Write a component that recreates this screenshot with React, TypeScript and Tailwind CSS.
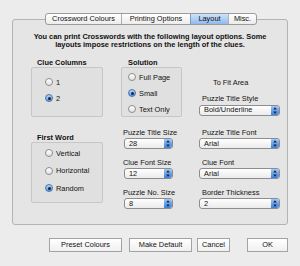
import React from 'react';

function Radio({ checked, label }: { checked?: boolean; label: string }) {
  return (
    <div className="flex h-[9px] items-center gap-[3px]">
      {checked ? (
        <span className="flex h-[8px] w-[8px] items-center justify-center rounded-full border border-[#4a74a8] bg-linear-to-b from-[#b7d6f7] to-[#5b97e2]">
          <span className="h-[3px] w-[3px] rounded-full bg-[#15233d]" />
        </span>
      ) : (
        <span className="h-[8px] w-[8px] rounded-full border border-[#8c8c8c] bg-linear-to-b from-white to-[#e2e2e2]" />
      )}
      <span className="leading-[9px]">{label}</span>
    </div>
  );
}

function Popup({ value, className = '' }: { value: string; className?: string }) {
  return (
    <div
      className={`flex h-[11px] items-center overflow-hidden rounded-[3px] border border-[#8d8d8d] bg-linear-to-b from-white to-[#ebebeb] pl-[4px] ${className}`}
    >
      <span className="flex-1 leading-none">{value}</span>
      <span className="flex h-full w-[8px] items-center justify-center rounded-r-[2px] bg-linear-to-b from-[#9cc8f6] to-[#3d7fdb]">
        <svg width="4" height="7" viewBox="0 0 4 7">
          <path d="M2 0.3L3.8 2.6H0.2Z M2 6.7L3.8 4.4H0.2Z" fill="#14223c" />
        </svg>
      </span>
    </div>
  );
}

function Label({ children, className = '' }: { children: React.ReactNode; className?: string }) {
  return <div className={`h-[9px] leading-[9px] whitespace-nowrap ${className}`}>{children}</div>;
}

function Button({ children, className = '' }: { children: React.ReactNode; className?: string }) {
  return (
    <div
      className={`flex h-[14px] items-center justify-center border border-[#a3a3a3] bg-linear-to-b from-white to-[#f0f0f0] leading-none ${className}`}
    >
      {children}
    </div>
  );
}

export default function App() {
  return (
    <div className="h-[266px] w-[300px] overflow-hidden bg-[#ececec] pt-[13px] font-['Liberation_Sans',Arial,sans-serif] text-[7.4px] text-[#111]">
      {/* tab strip */}
      <div className="relative z-10 ml-[45px] flex h-[12px] w-[212px] overflow-hidden rounded-[3px] border border-[#9b9b9b] bg-linear-to-b from-white to-[#ececec] leading-none">
        <div className="flex w-[75px] items-center justify-center">Crossword Colours</div>
        <div className="flex w-[69px] items-center justify-center border-l border-[#b0b0b0]">Printing Options</div>
        <div className="flex w-[38px] items-center justify-center border-l border-[#7d9cc4] bg-linear-to-b from-[#cfe2f8] to-[#8fbaed]">
          Layout
        </div>
        <div className="flex flex-1 items-center justify-center border-l border-[#b0b0b0]">Misc.</div>
      </div>

      {/* tab box */}
      <div className="mx-[12px] -mt-[6px] h-[206px] rounded-[3px] border border-[#b3b3b3] bg-[#e5e5e5] pt-[12.5px]">
        <p className="text-center font-bold leading-[8.5px]">
          You can print Crosswords with the following layout options. Some
          <br />
          layouts impose restrictions on the length of the clues.
        </p>

        <div className="mt-[8px] flex pl-[18px]">
          {/* left column */}
          <div className="flex w-[72px] flex-col">
            <Label className="pl-[6px] font-bold">Clue Columns</Label>
            <div className="mt-[0.5px] flex h-[50px] flex-col gap-[7px] rounded-[2px] border border-[#c6c6c6] bg-[#e0e0e0] pt-[9.5px] pl-[13px]">
              <Radio label="1" />
              <Radio label="2" checked />
            </div>
            <Label className="mt-[15.5px] pl-[6px] font-bold">First Word</Label>
            <div className="mt-[0.5px] flex h-[61px] flex-col gap-[8.5px] rounded-[2px] border border-[#c6c6c6] bg-[#e0e0e0] pt-[5.5px] pl-[13px]">
              <Radio label="Vertical" />
              <Radio label="Horizontal" />
              <Radio label="Random" checked />
            </div>
          </div>

          {/* middle column */}
          <div className="ml-[18px] flex w-[61px] flex-col">
            <Label className="pl-[7px] font-bold">Solution</Label>
            <div className="mt-[0.5px] flex h-[50px] flex-col gap-[7px] rounded-[2px] border border-[#c6c6c6] bg-[#e0e0e0] pt-[4.5px] pl-[6px]">
              <Radio label="Full Page" />
              <Radio label="Small" checked />
              <Radio label="Text Only" />
            </div>
            <Label className="mt-[10.5px] pl-[2px]">Puzzle Title Size</Label>
            <Popup value="28" className="mt-[1.5px] ml-[3px] w-[49px]" />
            <Label className="mt-[8.5px] pl-[2px]">Clue Font Size</Label>
            <Popup value="12" className="mt-[1.5px] ml-[3px] w-[49px]" />
            <Label className="mt-[8.5px] pl-[2px]">Puzzle No. Size</Label>
            <Popup value="8" className="mt-[1.5px] ml-[3px] w-[49px]" />
          </div>

          {/* right column */}
          <div className="ml-[17px] flex w-[81px] flex-col">
            <Label className="mt-[20px] pl-[14px]">To Fit Area</Label>
            <Label className="mt-[7px] pl-[3px]">Puzzle Title Style</Label>
            <Popup value="Bold/Underline" className="mt-[2px]" />
            <Label className="mt-[12px] pl-[3px]">Puzzle Title Font</Label>
            <Popup value="Arial" className="mt-[1.5px]" />
            <Label className="mt-[8.5px] pl-[3px]">Clue Font</Label>
            <Popup value="Arial" className="mt-[1.5px]" />
            <Label className="mt-[8.5px] pl-[3px]">Border Thickness</Label>
            <Popup value="2" className="mt-[1.5px]" />
          </div>
        </div>
      </div>

      {/* dialog buttons */}
      <div className="mt-[13px] flex justify-end pr-[12px]">
        <Button className="w-[73px]">Preset Colours</Button>
        <Button className="ml-[7px] w-[63px]">Make Default</Button>
        <Button className="ml-[5px] w-[33px]">Cancel</Button>
        <Button className="ml-[17px] w-[41px]">OK</Button>
      </div>
    </div>
  );
}
